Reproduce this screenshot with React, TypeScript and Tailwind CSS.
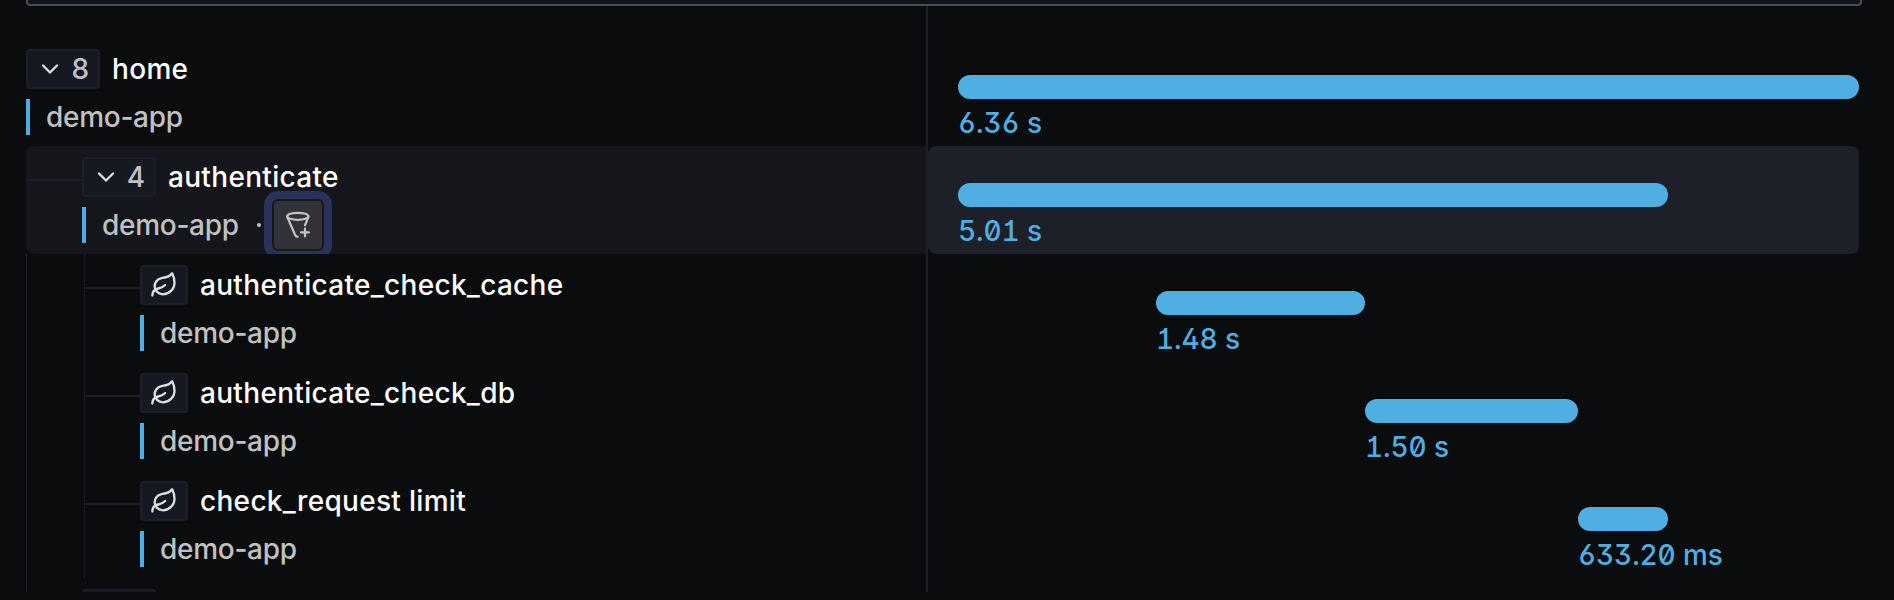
import { ReactNode } from "react";
import { ChevronDown, Leaf } from "lucide-react";

type Span = {
  name: string;
  children?: number;
  depth: number;
  start: number;
  width: number;
  duration: string;
  active?: boolean;
};

const spans: Span[] = [
  { name: "home", children: 8, depth: 0, start: 0, width: 901, duration: "6.36 s" },
  { name: "authenticate", children: 4, depth: 1, start: 0, width: 710, duration: "5.01 s", active: true },
  { name: "authenticate_check_cache", depth: 2, start: 198, width: 209, duration: "1.48 s" },
  { name: "authenticate_check_db", depth: 2, start: 407, width: 213, duration: "1.50 s" },
  { name: "check_request limit", depth: 2, start: 620, width: 90, duration: "633.20 ms" },
];

function FunnelPlus() {
  return (
    <svg className="h-7 w-7" viewBox="0 0 28 28" fill="none" stroke="#c4c4c8" strokeWidth="2.2" strokeLinecap="round" strokeLinejoin="round">
      <ellipse cx="13.8" cy="5.3" rx="10.600" ry="3.500" />
      <path d="M3.200 5.800 11.200 24.200q.8 2 2.500 1.400" />
      <path d="M24.400 5.800 21 14.300" />
      <path d="M21 17.500v7.800M17.100 21.400h7.800" />
    </svg>
  );
}

function Box({ children, wide }: { children?: ReactNode; wide?: boolean }) {
  return (
    <div className={`flex h-10 shrink-0 items-center rounded border-2 border-[#1d1e29] bg-[#161922] ${wide ? "w-[74px] justify-between pr-[9px] pl-2" : "w-12 justify-center"}`}>
      {children}
    </div>
  );
}

function Guides({ depth }: { depth: number }) {
  if (depth === 0) return null;
  if (depth === 1) return <div className="mt-[33px] h-0.5 w-14 shrink-0 bg-[#1d1e29]" />;
  return (
    <div className="flex h-[108px] w-[114px] shrink-0">
      <div className="w-[58px] border-l border-[#1d1e29]" />
      <div className="flex-1 border-l border-[#1d1e29] pt-[33px]">
        <div className="h-0.5 bg-[#1d1e29]" />
      </div>
    </div>
  );
}

function TreeRow({ span }: { span: Span }) {
  return (
    <div className={`flex h-[108px] shrink-0 overflow-hidden ${span.active ? "rounded-l-lg bg-[#15161b]" : ""}`}>
      <Guides depth={span.depth} />
      <div className="flex flex-col pt-[11px] whitespace-nowrap">
        <div className="flex h-10 items-center gap-3">
          <Box wide={span.children !== undefined}>
            {span.children !== undefined ? (
              <>
                <ChevronDown size={28} color="#dfdfdf" />
                <span className="text-[28px] leading-10 font-[450] text-[#c0c1c3]">{span.children}</span>
              </>
            ) : (
              <Leaf size={28} color="#dfdfdf" />
            )}
          </Box>
          <span className="text-[28px] leading-10 font-medium tracking-[0.31px] text-white">{span.name}</span>
        </div>
        <div className="mt-2.5 flex h-9 items-center">
          <div className="h-9 w-1 bg-[#4faee2]" />
          <span className="ml-4 text-[28px] leading-9 font-[450] tracking-[-0.28px] text-[#c0c1c3]">demo-app</span>
          {span.active && (
            <>
              <div className="ml-[18px] size-1 rounded-full bg-[#c0c1c3]" />
              <div className="ml-[3px] flex size-[68px] shrink-0 items-center justify-center rounded-[14px] bg-[#28325a]">
                <div className="flex size-[52px] items-center justify-center rounded-md border-2 border-[#17181d] bg-[#323338]">
                  <FunnelPlus />
                </div>
              </div>
            </>
          )}
        </div>
      </div>
    </div>
  );
}

function TimelineRow({ span }: { span: Span }) {
  return (
    <div className={`h-[108px] shrink-0 pt-[37px] pl-[30px] ${span.active ? "rounded-lg bg-[#1e2029]" : ""}`}>
      <div style={{ marginLeft: span.start }}>
        <div className="h-6 rounded-full bg-[#4faee2]" style={{ width: span.width }} />
        <div className="mt-1 text-[28px] leading-10 font-[450] tracking-[-0.1px] whitespace-nowrap text-[#4faee2] [font-feature-settings:'case','cpsp','dlig','salt'] [font-variant-numeric:lining-nums_tabular-nums_slashed-zero]">
          {span.duration}
        </div>
      </div>
    </div>
  );
}

export default function App() {
  return (
    <div className="flex h-[600px] w-[1894px] flex-col overflow-hidden bg-[#0b0c0e] pb-2 font-['Inter',sans-serif]">
      <div className="ml-[26px] h-1.5 w-[1836px] shrink-0 rounded-b border-2 border-t-0 border-[#484c59] bg-[#121317]" />
      <div className="ml-[26px] flex min-h-0 flex-1 overflow-hidden">
        <div className="flex w-[902px] shrink-0 flex-col overflow-hidden border-r-2 border-[#1d1e29] pt-8">
          {spans.map((s) => (
            <TreeRow key={s.name} span={s} />
          ))}
          <div className="flex h-[14px] shrink-0 border-l border-[#1d1e29] pt-[11px] pl-[55px]">
            <Box wide />
          </div>
        </div>
        <div className="flex w-[931px] shrink-0 flex-col pt-8">
          {spans.map((s) => (
            <TimelineRow key={s.name} span={s} />
          ))}
        </div>
      </div>
    </div>
  );
}
